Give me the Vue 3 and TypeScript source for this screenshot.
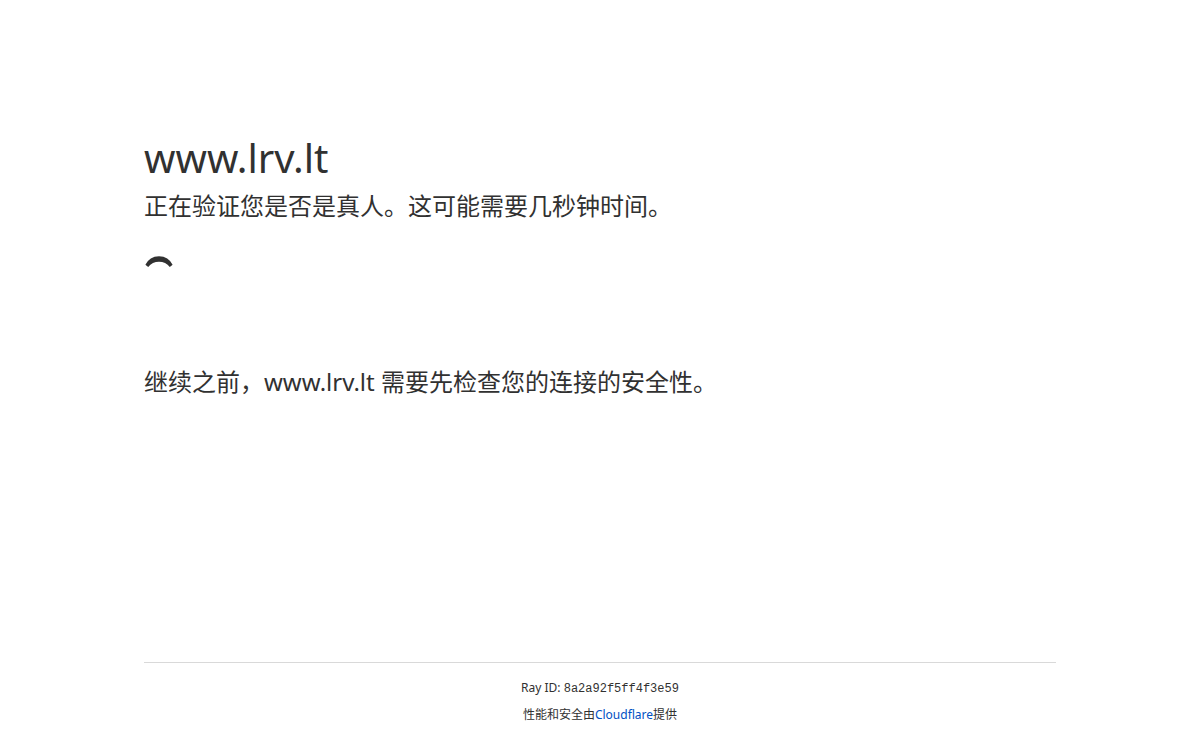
<script setup lang="ts">
const host: string = 'www.lrv.lt'
const rayId: string = '8a2a92f5ff4f3e59'
</script>

<template>
  <div class="page">
    <main class="content">
      <h1>{{ host }}</h1>
      <p class="lead">正在验证您是否是真人。这可能需要几秒钟时间。</p>
      <div class="spinner" role="status" aria-label="加载中">
        <svg viewBox="0 0 30 30" aria-hidden="true">
          <path d="M1.4 10.8 A15 15 0 0 1 28.6 10.8 L25.8 13 A13.6 13.6 0 0 0 4.2 13 Z" />
        </svg>
      </div>
      <p class="notice">继续之前，{{ host }} 需要先检查您的连接的安全性。</p>
    </main>
    <footer class="footer">
      <div class="ray">Ray ID: <code>{{ rayId }}</code></div>
      <div class="credit">性能和安全由<a href="#">Cloudflare</a>提供</div>
    </footer>
  </div>
</template>

<style>
body {
  margin: 0;
  background: #fff;
}
</style>

<style scoped>
.page {
  display: flex;
  flex-direction: column;
  box-sizing: border-box;
  min-height: 100vh;
  max-width: 960px;
  margin: 0 auto;
  padding: 128px 24px 0;
  color: #313131;
  font-family: "Noto Sans", "Noto Sans CJK SC", sans-serif;
}
.content {
  flex: 1;
}
h1 {
  margin: 0;
  font-size: 40px;
  font-weight: 400;
  line-height: 60px;
}
.lead,
.notice {
  margin: 0;
  font-size: 24px;
  line-height: 36px;
}
.spinner {
  height: 30px;
  margin: 30px 0 80px;
}
.spinner svg {
  display: block;
  width: 30px;
  height: 30px;
  fill: #313131;
}
.footer {
  border-top: 1px solid #d9d9d9;
  padding: 16px 0;
  text-align: center;
  font-size: 12px;
  line-height: 18px;
}
.ray {
  margin-bottom: 8px;
}
code {
  font-family: "Liberation Mono", monospace;
}
a {
  color: #0051c3;
  text-decoration: none;
}
</style>
